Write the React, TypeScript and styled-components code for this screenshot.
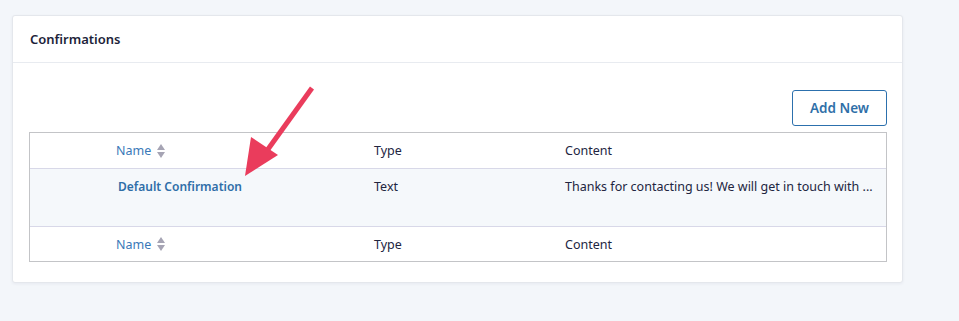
import React from 'react';
import styled, { createGlobalStyle } from 'styled-components';

const GlobalStyle = createGlobalStyle`
  html, body {
    margin: 0;
    padding: 0;
    background: #f3f6fa;
    font-family: 'Noto Sans', 'Open Sans', sans-serif;
  }
`;

const Page = styled.div`
  padding: 15px 56px 40px 12px;
  position: relative;
`;

const Card = styled.section`
  background: #ffffff;
  border: 1px solid #e4e7ec;
  border-radius: 3px;
  box-shadow: 0 1px 3px rgba(30, 40, 80, 0.06);
`;

const CardHeader = styled.header`
  height: 46px;
  display: flex;
  align-items: center;
  padding: 0 17px;
  border-bottom: 1px solid #e8ebf0;
  font-size: 13px;
  font-weight: 600;
  color: #1d1f3a;
`;

const CardBody = styled.div`
  padding: 27px 15px 20px 16px;
`;

const Toolbar = styled.div`
  display: flex;
  justify-content: flex-end;
  margin-bottom: 6px;
`;

const OutlineButton = styled.button`
  height: 36px;
  padding: 0 17px;
  background: #ffffff;
  border: 1px solid #2c70ad;
  border-radius: 3px;
  color: #2f6fa8;
  font-family: inherit;
  font-size: 13.5px;
  font-weight: 600;
  cursor: pointer;
`;

const Table = styled.div`
  border: 1px solid #c3c4c7;
`;

const Row = styled.div<{ $kind: 'head' | 'body' | 'foot' }>`
  display: grid;
  grid-template-columns: 70px 258px 191px 1fr;
  align-items: ${p => (p.$kind === 'body' ? 'start' : 'center')};
  height: ${p => (p.$kind === 'body' ? '48px' : p.$kind === 'head' ? '35px' : '34px')};
  padding-top: ${p => (p.$kind === 'body' ? '9px' : '0')};
  box-sizing: content-box;
  background: ${p => (p.$kind === 'body' ? '#f5f8fb' : '#ffffff')};
  border-top: ${p => (p.$kind === 'foot' ? '1px solid #d8d8e8' : 'none')};
  border-bottom: ${p => (p.$kind === 'head' ? '1px solid #d8d8e8' : 'none')};
`;

const Cell = styled.div<{ $indent?: number }>`
  padding-left: ${p => p.$indent ?? 16}px;
  padding-right: 8px;
  font-size: 12.5px;
  color: #22253f;
  white-space: nowrap;
`;

const SortLink = styled.span`
  display: inline-flex;
  align-items: center;
  gap: 5px;
  color: #3a79b8;
`;

const TitleLink = styled.a`
  color: #2f6ea8;
  font-size: 12px;
  font-weight: 600;
  text-decoration: none;
`;

const Arrow = styled.svg`
  position: absolute;
  left: 240px;
  top: 82px;
  pointer-events: none;
`;

const SortIcon = () => (
  <svg width="10" height="16" viewBox="0 0 10 16">
    <path d="M5 1 L9 7 L1 7 Z" fill="#a6a4b4" />
    <path d="M5 15 L9 9 L1 9 Z" fill="#a6a4b4" />
  </svg>
);

const HeaderCells = () => (
  <>
    <Cell />
    <Cell>
      <SortLink>
        Name <SortIcon />
      </SortLink>
    </Cell>
    <Cell>Type</Cell>
    <Cell>Content</Cell>
  </>
);

export default function App() {
  return (
    <Page>
      <GlobalStyle />
      <Card>
        <CardHeader>Confirmations</CardHeader>
        <CardBody>
          <Toolbar>
            <OutlineButton>Add New</OutlineButton>
          </Toolbar>
          <Table>
            <Row $kind="head">
              <HeaderCells />
            </Row>
            <Row $kind="body">
              <Cell />
              <Cell $indent={18}>
                <TitleLink href="#">Default Confirmation</TitleLink>
              </Cell>
              <Cell>Text</Cell>
              <Cell>Thanks for contacting us! We will get in touch with ...</Cell>
            </Row>
            <Row $kind="foot">
              <HeaderCells />
            </Row>
          </Table>
        </CardBody>
      </Card>
      <Arrow width="80" height="100" viewBox="0 0 80 100">
        <line x1="72" y1="6" x2="26" y2="70" stroke="#ea3c5c" strokeWidth="5" strokeLinecap="butt" />
        <path d="M5 94 L11 55 L38 73 Z" fill="#ea3c5c" />
      </Arrow>
    </Page>
  );
}
